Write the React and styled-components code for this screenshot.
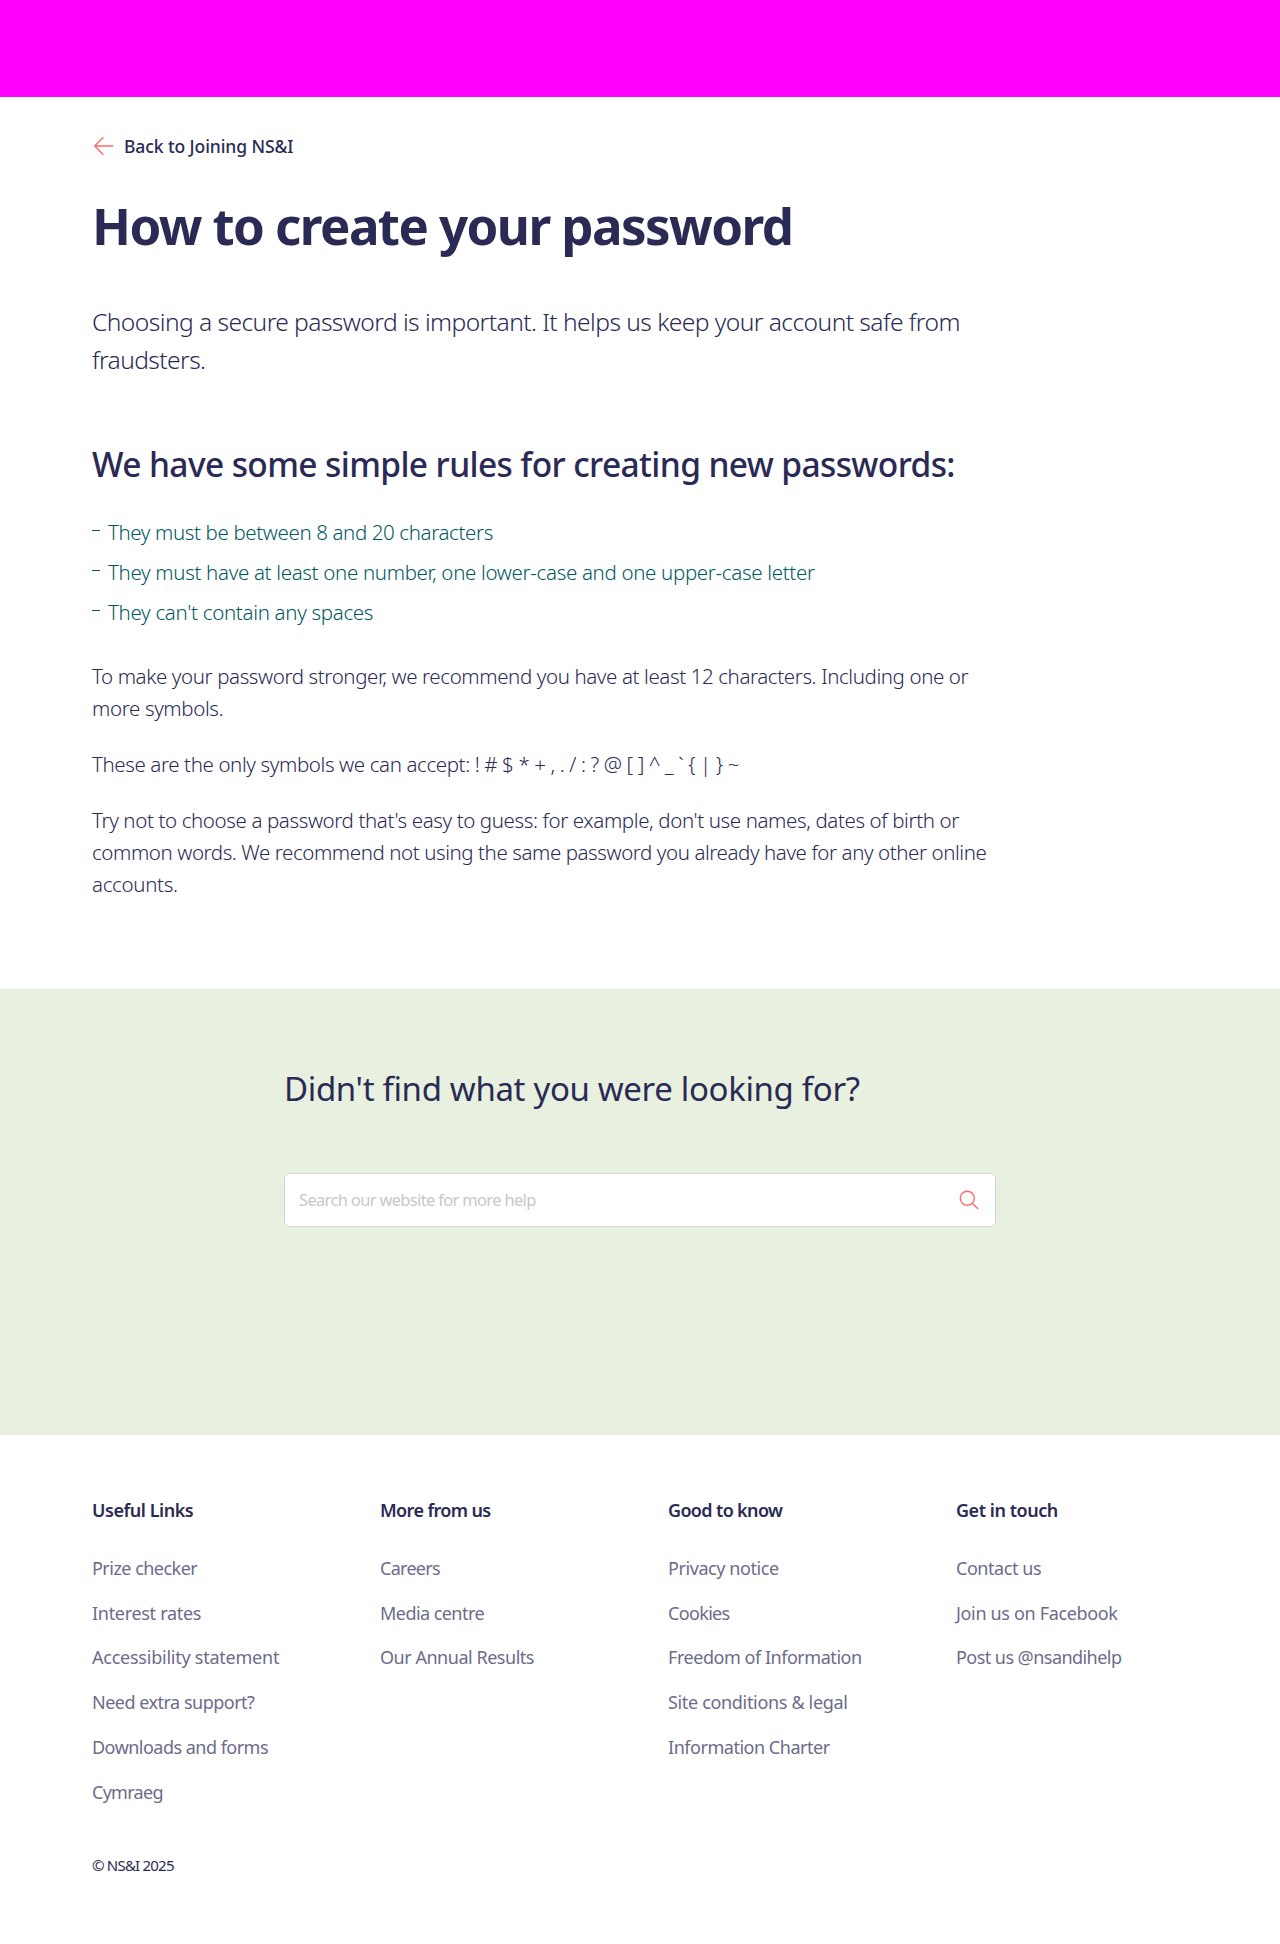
import React from "react";
import styled, { createGlobalStyle } from "styled-components";

const navy = "#2a2a54";
const coral = "#ff6b6b";

const GlobalStyle = createGlobalStyle`
  * { box-sizing: border-box; }
  body {
    margin: 0;
    background: #fff;
    color: ${navy};
    font-family: "Noto Sans", "Open Sans", sans-serif;
  }
  h1, h2, h3, p, ul { margin: 0; padding: 0; }
  ul { list-style: none; }
`;

const Page = styled.div`
  width: 1280px;
  height: 1944px;
  overflow: hidden;
  background: #fff;
`;

const Banner = styled.header`
  height: 97px;
  background: #ff00ff;
`;

const Article = styled.main`
  padding: 37px 92px 89px;
`;

/* One line of copy with its own tracking, in px. */
const Line = styled.span`
  display: block;
  white-space: nowrap;
  letter-spacing: ${(p) => p.$track || 0}px;
`;

const BackLink = styled.a`
  display: flex;
  align-items: center;
  width: max-content;
  color: ${navy};
  font-size: 17.5px;
  font-weight: 500;
  line-height: 24px;
  text-decoration: none;
`;

const ArrowIcon = styled.svg`
  width: 20px;
  height: 20px;
  margin: 0 10px 1px 2px;
`;

const Title = styled.h1`
  margin-top: 37px;
  font-size: 51px;
  font-weight: 700;
  line-height: 60px;
`;

const Lead = styled.p`
  margin-top: 48px;
  font-size: 24.6px;
  font-weight: 300;
  line-height: 38px;
`;

const RulesTitle = styled.h2`
  margin-top: 63px;
  font-size: 33.5px;
  font-weight: 500;
  line-height: 44px;
`;

const Rules = styled.ul`
  margin-top: 26px;
  color: #00595e;
  font-size: 20.5px;
  font-weight: 300;
  line-height: 40px;
`;

const Rule = styled.li`
  display: flex;
  &::before {
    content: "";
    width: 8px;
    height: 1px;
    margin: 18px 8px 0 0;
    background: currentColor;
  }
`;

const Paragraph = styled.p`
  margin-top: ${(p) => p.$gap || 24}px;
  font-size: 20.5px;
  font-weight: 300;
  line-height: 32px;
`;

const HelpBand = styled.section`
  height: 446px;
  padding: 78px 284px 0;
  background: #e8f1e0;
`;

const HelpTitle = styled.h2`
  font-size: 33px;
  font-weight: 400;
  line-height: 44px;
`;

const SearchBox = styled.form`
  display: flex;
  align-items: center;
  justify-content: space-between;
  height: 54px;
  margin-top: 62px;
  padding: 0 15px 0 14px;
  border: 1px solid #cfd8c9;
  border-radius: 5px;
  background: #fff;
`;

const Placeholder = styled.span`
  color: #c8c8c8;
  font-size: 16.5px;
  line-height: 24px;
`;

const SearchIcon = styled.svg`
  width: 22px;
  height: 22px;
`;

const Footer = styled.footer`
  padding: 63px 36px 0 92px;
`;

const Columns = styled.div`
  display: grid;
  grid-template-columns: repeat(4, 288px);
`;

const ColumnTitle = styled.h3`
  margin-bottom: 23.8px;
  font-size: 18px;
  font-weight: 600;
  line-height: 24px;
`;

const FooterLink = styled.a`
  display: block;
  color: #6c6c8a;
  font-size: 18px;
  line-height: 44.8px;
  text-decoration: none;
`;

const Copyright = styled.p`
  margin-top: 40.2px;
  font-size: 15px;
  line-height: 20px;
`;

const rules = [
  ["They must be between 8 and 20 characters", -0.38],
  ["They must have at least one number, one lower-case and one upper-case letter", -0.33],
  ["They can't contain any spaces", -0.31],
];

const paragraphs = [
  [
    ["To make your password stronger, we recommend you have at least 12 characters. Including one or", -0.395],
    ["more symbols.", -0.37],
  ],
  [["These are the only symbols we can accept: ! # $ * + , . / : ? @ [ ] ^ _ ` { | } ~", -0.386]],
  [
    ["Try not to choose a password that's easy to guess: for example, don't use names, dates of birth or", -0.385],
    ["common words. We recommend not using the same password you already have for any other online", -0.42],
    ["accounts.", -0.33],
  ],
];

const columns = [
  {
    title: ["Useful Links", -0.45],
    links: [
      ["Prize checker", -0.52],
      ["Interest rates", -0.3],
      ["Accessibility statement", -0.24],
      ["Need extra support?", -0.5],
      ["Downloads and forms", -0.52],
      ["Cymraeg", -0.72],
    ],
  },
  {
    title: ["More from us", -0.62],
    links: [
      ["Careers", -0.72],
      ["Media centre", -0.55],
      ["Our Annual Results", -0.47],
    ],
  },
  {
    title: ["Good to know", -0.65],
    links: [
      ["Privacy notice", -0.42],
      ["Cookies", -0.66],
      ["Freedom of Information", -0.46],
      ["Site conditions & legal", -0.33],
      ["Information Charter", -0.47],
    ],
  },
  {
    title: ["Get in touch", -0.45],
    links: [
      ["Contact us", -0.45],
      ["Join us on Facebook", -0.34],
      ["Post us @nsandihelp", -0.55],
    ],
  },
];

export default function App() {
  return (
    <Page>
      <GlobalStyle />
      <Banner />
      <Article>
        <BackLink>
          <ArrowIcon viewBox="0 0 20 20" fill="none" stroke={coral} strokeWidth="1.4">
            <path d="M19.5 10H1M9.3 1.3L0.8 10l8.5 8.7" />
          </ArrowIcon>
          <Line $track={-0.09}>Back to Joining NS&amp;I</Line>
        </BackLink>
        <Title>
          <Line $track={-1.57}>How to create your password</Line>
        </Title>
        <Lead>
          <Line $track={-0.565}>
            Choosing a secure password is important. It helps us keep your account safe from
          </Line>
          <Line $track={-0.6}>fraudsters.</Line>
        </Lead>
        <RulesTitle>
          <Line $track={-0.61}>We have some simple rules for creating new passwords:</Line>
        </RulesTitle>
        <Rules>
          {rules.map(([text, track]) => (
            <Rule key={text}>
              <Line $track={track}>{text}</Line>
            </Rule>
          ))}
        </Rules>
        {paragraphs.map((lines, i) => (
          <Paragraph key={i} $gap={i === 0 ? 28 : 24}>
            {lines.map(([text, track]) => (
              <Line key={text} $track={track}>
                {text}
              </Line>
            ))}
          </Paragraph>
        ))}
      </Article>
      <HelpBand>
        <HelpTitle>
          <Line $track={-0.35}>Didn't find what you were looking for?</Line>
        </HelpTitle>
        <SearchBox>
          <Placeholder>
            <Line $track={-0.67}>Search our website for more help</Line>
          </Placeholder>
          <SearchIcon viewBox="0 0 22 22" fill="none" stroke={coral} strokeWidth="1.4">
            <circle cx="9.3" cy="9.3" r="7" />
            <path d="M14.2 14.2l6 5.8" />
          </SearchIcon>
        </SearchBox>
      </HelpBand>
      <Footer>
        <Columns>
          {columns.map(({ title, links }) => (
            <nav key={title[0]}>
              <ColumnTitle>
                <Line $track={title[1]}>{title[0]}</Line>
              </ColumnTitle>
              {links.map(([text, track]) => (
                <FooterLink key={text}>
                  <Line $track={track}>{text}</Line>
                </FooterLink>
              ))}
            </nav>
          ))}
        </Columns>
        <Copyright>
          <Line $track={-0.78}>© NS&amp;I 2025</Line>
        </Copyright>
      </Footer>
    </Page>
  );
}
